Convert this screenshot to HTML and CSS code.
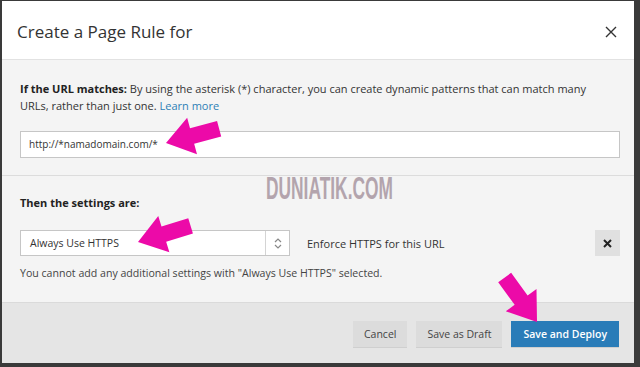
FILE: index.html
```html
<!DOCTYPE html>
<html lang="en">

<head>
    <meta charset="UTF-8">
    <meta name="viewport" content="width=device-width, initial-scale=1.0">
    <title>Create a Page Rule</title>
    <link rel="stylesheet" href="styles.css">
</head>

<body>
    <!-- Modal -->
    <div class="modal">
        <div class="modal-header">
            <h2>Create a Page Rule for</h2>
            <button class="close" aria-label="Close">
                <svg width="12" height="12" viewBox="0 0 12 12">
                    <path d="M1 1L11 11M11 1L1 11" stroke="#333" stroke-width="1.4" fill="none" />
                </svg>
            </button>
        </div>

        <div class="section url-section">
            <p class="desc"><strong>If the URL matches:</strong> By using the asterisk (*) character, you can create dynamic patterns that can match many URLs, rather than just one. <a href="#">Learn more</a></p>
            <div class="text-input">http://*namadomain.com/*</div>
        </div>

        <div class="section settings-section">
            <h3>Then the settings are:</h3>
            <div class="setting-row">
                <div class="select">
                    <span class="select-value">Always Use HTTPS</span>
                    <span class="stepper">
                        <svg width="8" height="11" viewBox="0 0 8 11">
                            <path d="M1 4L4 1L7 4M1 7L4 10L7 7" stroke="#888" stroke-width="1.2" fill="none" />
                        </svg>
                    </span>
                </div>
                <span class="setting-desc">Enforce HTTPS for this URL</span>
                <button class="remove" aria-label="Remove">
                    <svg width="9" height="9" viewBox="0 0 9 9">
                        <path d="M1 1L8 8M8 1L1 8" stroke="#222" stroke-width="2" fill="none" />
                    </svg>
                </button>
            </div>
            <p class="note">You cannot add any additional settings with "Always Use HTTPS" selected.</p>
        </div>

        <div class="modal-footer">
            <button class="btn">Cancel</button>
            <button class="btn">Save as Draft</button>
            <button class="btn btn-primary">Save and Deploy</button>
        </div>
    </div>

    <!-- Watermark -->
    <div class="watermark">DUNIATIK.COM</div>

    <!-- Pointer arrows -->
    <svg class="arrows" width="640" height="367" viewBox="0 0 640 367">
        <g fill="#ec0aa8">
            <polygon transform="translate(166 143) rotate(165)" points="-55,-8 -27,-8 -27,-19 0,0 -27,19 -27,8 -55,8" />
            <polygon transform="translate(138 242) rotate(163)" points="-55,-8 -27,-8 -27,-19 0,0 -27,19 -27,8 -55,8" />
            <polygon transform="translate(537 322) rotate(54)" points="-55,-8 -27,-8 -27,-19 0,0 -27,19 -27,8 -55,8" />
        </g>
    </svg>
</body>

</html>
```

FILE: styles.css
```css
* {
    margin: 0;
    padding: 0;
    box-sizing: border-box;
    font-family: 'Open Sans', 'Liberation Sans', sans-serif;
}

body {
    background: #3a3a3a;
    width: 640px;
    height: 367px;
    overflow: hidden;
    position: relative;
    padding: 1px 6px 4px 2px;
}

.modal {
    background: #f4f4f4;
    height: 362px;
    display: flex;
    flex-direction: column;
    color: #333;
}

.modal-header {
    background: #fff;
    height: 59px;
    border-bottom: 1px solid #e2e2e2;
    display: flex;
    align-items: center;
    justify-content: space-between;
    padding: 0 16px 0 15px;
}

.modal-header h2 {
    font-size: 17px;
    font-weight: 400;
    color: #333;
    padding-top: 3px;
}

.close {
    background: none;
    border: none;
    width: 14px;
    height: 14px;
    display: flex;
    align-items: center;
    justify-content: center;
    margin-top: 3px;
}

.section {
    padding: 0 14px 0 18px;
    border-bottom: 1px solid #dcdcdc;
}

.url-section {
    padding-top: 20px;
    padding-bottom: 17px;
}

.desc {
    font-size: 11px;
    line-height: 17px;
    max-width: 590px;
}

.desc strong,
h3 {
    font-weight: 700;
    color: #222;
}

.desc a {
    color: #2d80b6;
    text-decoration: none;
}

.text-input {
    margin-top: 17px;
    height: 27px;
    background: #fff;
    border: 1px solid #c6c6c6;
    font-size: 10px;
    line-height: 25px;
    padding-left: 8px;
    color: #333;
}

.settings-section {
    padding-top: 18px;
    padding-bottom: 21px;
    border-bottom: 1px solid #dadada;
}

.settings-section h3 {
    font-size: 11px;
    line-height: 17px;
}

.setting-row {
    margin-top: 19px;
    display: flex;
    align-items: center;
    height: 26px;
}

.select {
    width: 270px;
    height: 26px;
    background: #fff;
    border: 1px solid #c6c6c6;
    display: flex;
    align-items: center;
}

.select-value {
    flex: 1;
    font-size: 10.5px;
    padding-left: 9px;
    color: #333;
}

.stepper {
    width: 24px;
    height: 100%;
    border-left: 1px solid #d4d4d4;
    display: flex;
    align-items: center;
    justify-content: center;
}

.setting-desc {
    flex: 1;
    font-size: 11px;
    padding-left: 17px;
    color: #333;
}

.remove {
    width: 25px;
    height: 26px;
    background: #e0e0e0;
    border: none;
    display: flex;
    align-items: center;
    justify-content: center;
}

.note {
    margin-top: 9px;
    font-size: 10.6px;
    line-height: 16px;
    color: #444;
}

.modal-footer {
    flex: 1;
    background: #e5e5e5;
    display: flex;
    justify-content: flex-end;
    align-items: flex-start;
    gap: 9px;
    padding: 18px 15px 0 0;
}

.btn {
    height: 26px;
    padding: 0 11px;
    background: #dcdcdc;
    border: none;
    font-size: 10.5px;
    color: #444;
    box-shadow: 0 1px 0 #cfcfcf;
}

.btn-primary {
    background: #2a7cb8;
    color: #fff;
    font-weight: 600;
    padding: 0 12px;
}

.watermark {
    position: absolute;
    left: 266px;
    top: 171px;
    font-family: 'Liberation Sans Narrow', 'Liberation Sans', sans-serif;
    font-weight: 700;
    font-size: 31px;
    color: #b3a4ad;
    transform: scaleX(0.56);
    transform-origin: left top;
    pointer-events: none;
}

.arrows {
    position: absolute;
    left: 0;
    top: 0;
    pointer-events: none;
}
```
